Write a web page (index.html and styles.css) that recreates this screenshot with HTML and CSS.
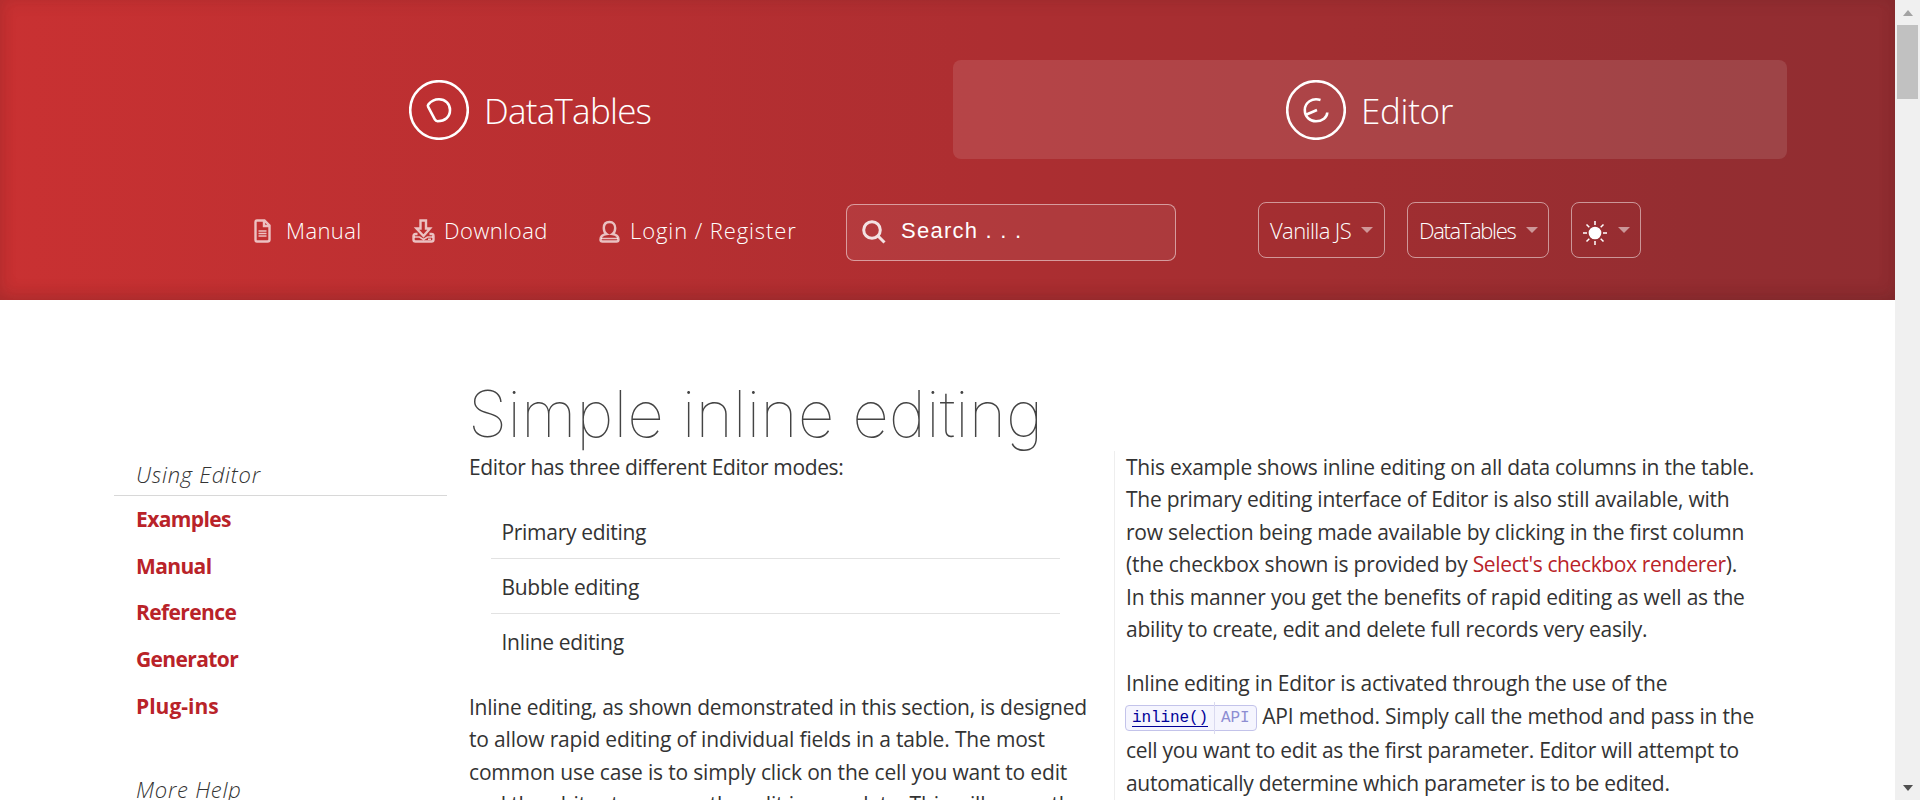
FILE: index.html
```html
<!DOCTYPE html>
<html lang="en">
<head>
<meta charset="utf-8">
<title>Editor example - Simple inline editing</title>
<link rel="stylesheet" href="styles.css">
</head>
<body>
<div class="page">
  <header class="header">
    <div class="products">
      <a class="product">
        <svg class="logo" viewBox="0 0 60 60"><circle cx="30" cy="30" r="28.8"/><path d="M19.200 27Q18.400 25.600 19.400 24.400C22.500 20.500 26 19.300 30 19.300C36.500 19.300 41 24 41 30C41 37 36 41.200 28.500 41.200Q26.800 41.200 25.800 39.400Z"/></svg>
        <span class="product-name name-dt">DataTables</span>
      </a>
      <a class="product active">
        <svg class="logo" viewBox="0 0 60 60"><circle cx="30" cy="30" r="28.800"/><path d="M34.500 20C26 17.500 18.800 22.500 18.800 30C18.800 37 24 41.300 30 41.300C36.500 41.300 41 37.500 41.300 32.500M20.500 34.500L31 30"/></svg>
        <span class="product-name name-ed">Editor</span>
      </a>
    </div>
    <nav class="nav">
      <a class="nav-link">
        <svg class="i-manual" viewBox="0 0 17 24"><path d="M3 1.500H10.500L15.500 6.500V20.500Q15.500 22.500 13.500 22.500H3Q1.500 22.500 1.500 21V3Q1.500 1.500 3 1.500ZM10 1.500V7H15.500"/><path class="fine" d="M4.500 12H12.500M4.500 14.500H12.500M4.500 17H12.500"/></svg>
        <span class="t-manual">Manual</span>
      </a>
      <a class="nav-link">
        <svg class="i-download" viewBox="0 0 23 24"><path d="M8.500 1.500H14V9.500H18L11.500 17L4.500 9.500H8.500Z"/><path d="M5.500 15H3.500Q1.500 15 1.500 17V20.500Q1.500 22.500 3.500 22.500H19.500Q21.500 22.500 21.500 20.500V17Q21.500 15 19.500 15H17.500"/><path class="fine" d="M2 18H7.500L11.500 20.500L15.500 18H21M16 20.300H19"/></svg>
        <span class="t-download">Download</span>
      </a>
      <a class="nav-link">
        <svg class="i-login" viewBox="0 0 21 24"><path d="M10.500 3C6.800 3 4.800 5.500 4.800 9C4.800 12 6 14 7.500 15C3.500 15.700 1.500 17.500 1.500 20.500Q1.500 22.500 3.500 22.500H17.500Q19.500 22.500 19.500 20.500C19.500 17.500 17.500 15.700 13.500 15C15 14 16.200 12 16.200 9C16.200 5.500 14.200 3 10.500 3Z"/><path class="fine" d="M2 19.500H19"/></svg>
        <span class="t-login">Login / Register</span>
      </a>
      <div class="search">
        <svg class="i-search" viewBox="0 0 24 24"><circle cx="10" cy="10" r="8.300"/><path d="M16 16L22.500 22.500"/></svg>
        <span>Search . . .</span>
      </div>
      <div class="options">
        <a class="option o-js"><span>Vanilla JS</span><i class="caret"></i></a>
        <a class="option o-dt"><span>DataTables</span><i class="caret"></i></a>
        <a class="option o-theme">
          <svg class="i-sun" viewBox="0 0 24 24"><circle cx="12" cy="12" r="5.600"/><path d="M12 0V4M12 20V24M0 12H4M20 12H24M3.500 3.500L6.300 6.300M17.700 17.700L20.500 20.500M20.500 3.500L17.700 6.300M6.300 17.700L3.500 20.500"/></svg>
          <i class="caret"></i>
        </a>
      </div>
    </nav>
  </header>
  <div class="body">
    <aside class="sidebar">
      <h3 class="side-title">Using Editor</h3>
      <ul class="side-list">
        <li>Examples</li>
        <li>Manual</li>
        <li>Reference</li>
        <li>Generator</li>
        <li class="wide">Plug-ins</li>
      </ul>
      <h3 class="side-title">More Help</h3>
    </aside>
    <main class="main">
      <h1 class="title">Simple inline editing</h1>
      <div class="columns">
        <section class="col-left">
          <p><span class="line s5">Editor has three different Editor modes:</span></p>
          <ul class="modes">
            <li>Primary editing</li>
            <li>Bubble editing</li>
            <li>Inline editing</li>
          </ul>
          <p>
            <span class="line s3">Inline editing, as shown demonstrated in this section, is designed</span>
            <span class="line s1">to allow rapid editing of individual fields in a table. The most</span>
            <span class="line s1">common use case is to simply click on the cell you want to edit</span>
            <span class="line s1">and then hit return once the edit is complete. This will cause the</span>
          </p>
        </section>
        <section class="col-right">
          <p>
            <span class="line s3">This example shows inline editing on all data columns in the table.</span>
            <span class="line s3">The primary editing interface of Editor is also still available, with</span>
            <span class="line s2">row selection being made available by clicking in the first column</span>
            <span class="line s2">(the checkbox shown is provided by <a class="link">Select's checkbox renderer</a>).</span>
            <span class="line s2">In this manner you get the benefits of rapid editing as well as the</span>
            <span class="line s3">ability to create, edit and delete full records very easily.</span>
          </p>
          <p>
            <span class="line s2">Inline editing in Editor is activated through the use of the</span>
            <span class="line s2 with-code"><code class="api"><a>inline()</a><span class="api-tag">API</span></code> API method. Simply call the method and pass in the</span>
            <span class="line s3">cell you want to edit as the first parameter. Editor will attempt to</span>
            <span class="line s4">automatically determine which parameter is to be edited.</span>
          </p>
        </section>
      </div>
    </main>
  </div>
</div>
<div class="scrollbar"><i class="arrow up"></i><i class="thumb"></i><i class="arrow down"></i></div>
</body>
</html>
```
FILE: styles.css
```css
* { box-sizing: border-box; }
body {
  margin: 0;
  display: flex;
  height: 800px;
  overflow: hidden;
  background: #fff;
  color: #333;
  font: 400 21px/32.4px "Open Sans", "Noto Sans", sans-serif;
}
p, ul, h1, h3 { margin: 0; padding: 0; }
ul { list-style: none; }
svg { display: block; flex: none; fill: none; stroke: #fff; }

.page { width: 1895px; height: 800px; overflow: hidden; }

.header {
  height: 300px;
  padding-top: 60px;
  color: #fff;
  font-weight: 300;
  background: linear-gradient(90deg, #c93132 0%, #ad2e31 52%, #a22e31 70%, #942d31 90%, #912d31 100%);
  box-shadow: inset 0 0 18px rgba(60, 25, 25, .1), inset 0 -8px 20px -6px rgba(60, 25, 25, .2);
}
.products { display: flex; gap: 6px; padding-left: 113px; }
.product {
  display: flex;
  align-items: center;
  justify-content: center;
  gap: 15px;
  width: 834px;
  height: 99px;
  border-radius: 8px;
}
.product.active { background: rgba(255, 255, 255, .11); }
.logo { width: 60px; height: 60px; stroke-width: 2.6; }
.product-name { font-size: 35px; line-height: 50px; padding-top: 2px; }
.name-dt { width: 167px; letter-spacing: -.75px; }
.name-ed { width: 93px; letter-spacing: -.3px; }

.nav { display: flex; align-items: center; height: 61px; margin-top: 41px; padding-left: 254px; font-size: 22px; white-space: nowrap; }
.nav-link { display: flex; align-items: center; }
.nav-link svg { stroke: rgba(255, 255, 255, .7); stroke-width: 2.4; height: 24px; }
.nav-link svg .fine { stroke-width: 1.5; }
.i-manual { width: 17px; margin-right: 15px; }
.i-download { width: 23px; margin-right: 9px; }
.i-login { width: 21px; margin-right: 10px; }
.t-manual { width: 126px; letter-spacing: .4px; }
.t-download { width: 155px; letter-spacing: .5px; }
.t-login { width: 216px; letter-spacing: .9px; }

.search {
  display: flex;
  align-items: center;
  width: 330px;
  height: 57px;
  margin-top: 3px;
  padding: 0 0 4px 15px;
  border: 1px solid rgba(255, 255, 255, .5);
  border-radius: 8px;
  background: rgba(255, 255, 255, .06);
  font: 400 22px "Liberation Sans", sans-serif;
  letter-spacing: 1.25px;
}
.search span { padding-top: 2px; }
.i-search { width: 24px; height: 24px; margin: 4px 15px 0 0; stroke-width: 3; opacity: .85; }

.options { display: flex; gap: 22px; margin: -2px 0 0 82px; }
.option {
  display: flex;
  align-items: center;
  height: 56px;
  padding-left: 11px;
  border: 1px solid rgba(255, 255, 255, .5);
  border-radius: 8px;
}
.option span { padding-top: 1px; }
.o-js { width: 127px; letter-spacing: -.6px; }
.o-js span { width: 91px; }
.o-dt { width: 142px; letter-spacing: -1.35px; }
.o-dt span { width: 107px; }
.o-theme { width: 70px; }
.i-sun { width: 24px; height: 24px; margin: 7px 11px 0 0; fill: #fff; stroke-width: 1.5; }
.caret { border: 6px solid transparent; border-top-color: rgba(255, 255, 255, .5); border-bottom: 0; }

.body { display: flex; padding-left: 114px; }
.sidebar { width: 333px; margin-right: 22px; padding-top: 158px; }
.side-title {
  height: 38px;
  padding-left: 22px;
  border-bottom: 1px solid #d8d8d8;
  font: italic 300 22px/32px "Open Sans", sans-serif;
  letter-spacing: .75px;
}
.side-list { padding: 7px 0 36.500px 22px; color: #b92329; font-weight: 700; letter-spacing: -.62px; }
.side-list li { height: 46.700px; line-height: 33px; }
.side-list .wide { letter-spacing: 0; }

.main { width: 1320px; padding-top: 74px; }
.title {
  height: 77px;
  padding-top: 1px;
  font: 100 64px/77px "Inter", sans-serif;
  letter-spacing: -.05px;
  text-indent: -1px;
  color: #444;
}
.columns { display: flex; }
.col-left { width: 645px; height: 420px; }
.col-right { width: 660px; height: 420px; padding-left: 11px; border-left: 1px solid #eee; }
.columns p { margin-bottom: 21.500px; }
.line { display: block; white-space: nowrap; }
.s1 { letter-spacing: -.17px; }
.s2 { letter-spacing: -.21px; }
.s3 { letter-spacing: -.26px; }
.s4 { letter-spacing: -.3px; }
.s5 { letter-spacing: -.35px; }
.col-left .modes { width: 569px; margin: -1px 0 22px 22px; letter-spacing: -.3px; }
.modes li { height: 55px; padding: 12px 10.500px 0; border-bottom: 1px solid #e2e2e2; }
.modes li:last-child { border-bottom: 0; }
.link { color: #b92329; letter-spacing: -.37px; }

.with-code { height: 35px; line-height: 34px; }
.api {
  display: inline-flex;
  align-items: center;
  width: 132px;
  height: 26px;
  vertical-align: 2px;
  margin: -4px 0 -5px -1px;
  padding-left: 6px;
  border: 1px solid #c3c3ea;
  border-radius: 4px;
  background: #f5f5fe;
  font: 16px/20px "Liberation Mono", monospace;
  letter-spacing: -.1px;
}
.api a { width: 82px; padding-top: 1px; color: #000098; background: linear-gradient(#000098, #000098) 0 19px / 76px 1px no-repeat; }
.api-tag { padding: 1px 0 0 6px; border-left: 1px solid #dadaf0; line-height: 31px; color: #8d8dd2; }

.scrollbar { display: flex; flex-direction: column; align-items: center; width: 25px; height: 800px; background: #f0f0f0; }
.arrow { border: 5.500px solid transparent; }
.arrow.up { margin-top: 10px; border-top: 0; border-bottom: 6px solid #a3a3a3; }
.thumb { width: 21px; height: 74px; margin-top: 9px; background: #c1c1c1; }
.arrow.down { margin: auto 0 9px; border-bottom: 0; border-top: 6px solid #505050; }
```
